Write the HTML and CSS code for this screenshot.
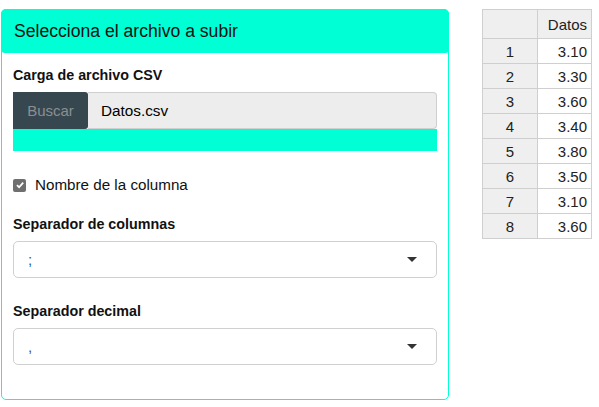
FILE: index.html
```html
<!DOCTYPE html>
<html lang="es">
<head>
<meta charset="utf-8">
<link rel="stylesheet" href="styles.css">
</head>
<body>
<div class="page">
  <div class="panel">
    <div class="panel-heading">Selecciona el archivo a subir</div>
    <div class="panel-body">
      <label class="field-label">Carga de archivo CSV</label>
      <div class="file-group">
        <span class="btn-file">Buscar</span>
        <span class="file-name">Datos.csv</span>
      </div>
      <div class="progress"></div>
      <label class="check">
        <span class="checkbox"><svg width="10" height="10" viewBox="0 0 10 10"><path d="M2 5.2 L4.1 7.3 L8.2 2.6" fill="none" stroke="#fff" stroke-width="1.8"/></svg></span>
        <span>Nombre de la columna</span>
      </label>
      <label class="field-label">Separador de columnas</label>
      <div class="select"><span class="select-value">;</span><span class="caret"></span></div>
      <label class="field-label second">Separador decimal</label>
      <div class="select"><span class="select-value">,</span><span class="caret"></span></div>
    </div>
  </div>
  <table class="data">
    <thead>
      <tr><th></th><th>Datos</th></tr>
    </thead>
    <tbody>
      <tr><td class="idx">1</td><td>3.10</td></tr>
      <tr><td class="idx">2</td><td>3.30</td></tr>
      <tr><td class="idx">3</td><td>3.60</td></tr>
      <tr><td class="idx">4</td><td>3.40</td></tr>
      <tr><td class="idx">5</td><td>3.80</td></tr>
      <tr><td class="idx">6</td><td>3.50</td></tr>
      <tr><td class="idx">7</td><td>3.10</td></tr>
      <tr><td class="idx">8</td><td>3.60</td></tr>
    </tbody>
  </table>
</div>
</body>
</html>
```
FILE: styles.css
```css
* { box-sizing: border-box; }
html, body { margin: 0; padding: 0; background: #fff; }
body { font-family: "Liberation Sans", Arial, sans-serif; color: #000; }
.page {
  display: flex;
  align-items: flex-start;
  padding: 9px 0 0 1px;
  gap: 33px;
}
.panel {
  width: 448px;
  height: 391px;
  border: 1px solid #00ffd5;
  border-radius: 5px;
}
.panel-heading {
  background: #00ffd5;
  height: 44px;
  margin: -1px -1px 0 -1px;
  border-radius: 5px 5px 4px 4px;
  padding: 11px 12px 0 13px;
  font-size: 17.6px;
  line-height: 22px;
  color: #111;
}
.panel-body {
  padding: 12px 11px 0 11px;
  display: flex;
  flex-direction: column;
}
.field-label {
  font-weight: bold;
  font-size: 14.3px;
  line-height: 20px;
  margin-bottom: 7px;
  color: #111;
}
.file-group {
  display: flex;
  height: 37px;
}
.btn-file {
  width: 75px;
  background: #37474f;
  color: #8a8f92;
  font-size: 15px;
  display: flex;
  align-items: center;
  justify-content: center;
  border-radius: 0 3px 3px 0;
}
.file-name {
  flex: 1;
  background: #ededed;
  border: 1px solid #cfcfcf;
  border-left: none;
  border-radius: 0 4px 4px 0;
  font-size: 15.3px;
  display: flex;
  align-items: center;
  padding-left: 13px;
}
.progress {
  height: 22px;
  background: #00ffd5;
}
.check {
  display: flex;
  align-items: center;
  gap: 9px;
  font-size: 15.2px;
  margin-top: 25px;
  margin-bottom: 20px;
  line-height: 18px;
  color: #111;
}
.checkbox {
  width: 13px;
  height: 13px;
  background: #6f6f6f;
  border-radius: 2px;
  display: flex;
  align-items: center;
  justify-content: center;
}
.select {
  height: 37px;
  border: 1px solid #d0d0d0;
  border-radius: 5px;
  display: flex;
  align-items: center;
  justify-content: space-between;
  padding: 0 19px 0 14px;
}
.select-value {
  color: #1a5aa8;
  font-size: 15px;
}
.caret {
  width: 0;
  height: 0;
  border-left: 5px solid transparent;
  border-right: 5px solid transparent;
  border-top: 5px solid #333;
}
.field-label.second { margin-top: 23px; }
.data {
  border-collapse: collapse;
  font-size: 15px;
  color: #222;
}
.data th, .data td {
  border: 1px solid #cfcfcf;
  padding: 0 4px;
  height: 25px;
}
.data th {
  background: #efefef;
  font-weight: normal;
  height: 29px;
  text-align: right;
}
.data th:first-child { width: 55px; }
.data th:last-child { width: 54px; }
.data td { text-align: right; }
.data td.idx { background: #efefef; text-align: center; }
```
